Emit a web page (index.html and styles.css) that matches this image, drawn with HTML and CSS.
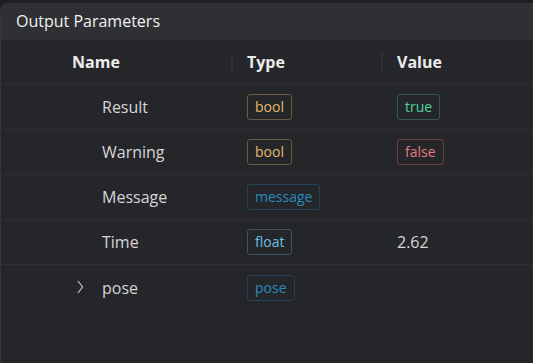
FILE: index.html
```html
<!DOCTYPE html>
<html lang="en">
<head>
  <meta charset="UTF-8">
  <title>Output Parameters</title>
  <link rel="stylesheet" href="styles.css">
</head>
<body>
  <div class="panel">
    <div class="panel-title">Output Parameters</div>
    <div class="table">
      <div class="row head">
        <div class="cell name">Name</div>
        <div class="cell type">Type</div>
        <div class="cell value">Value</div>
      </div>
      <div class="row">
        <div class="cell name">Result</div>
        <div class="cell type"><span class="tag tag-bool">bool</span></div>
        <div class="cell value"><span class="tag tag-true">true</span></div>
      </div>
      <div class="row">
        <div class="cell name">Warning</div>
        <div class="cell type"><span class="tag tag-bool">bool</span></div>
        <div class="cell value"><span class="tag tag-false">false</span></div>
      </div>
      <div class="row">
        <div class="cell name">Message</div>
        <div class="cell type"><span class="tag tag-msg">message</span></div>
        <div class="cell value"></div>
      </div>
      <div class="row">
        <div class="cell name">Time</div>
        <div class="cell type"><span class="tag tag-float">float</span></div>
        <div class="cell value">2.62</div>
      </div>
      <div class="row last">
        <div class="cell name">
          <svg class="chevron" width="10" height="14" viewBox="0 0 10 14"><path d="M3 1 L7.5 7 L3 13" fill="none" stroke="#c8c8c8" stroke-width="1.2"/></svg>
          pose
        </div>
        <div class="cell type"><span class="tag tag-msg">pose</span></div>
        <div class="cell value"></div>
      </div>
    </div>
  </div>
</body>
</html>
```

FILE: styles.css
```css
:root {
  --outer-bg: #1e1f23;
  --title-bg: #2f3033;
  --table-bg: #25262a;
  --line: #2e2f33;
  --text: #d6d6d6;
  --head-text: #ececec;
  --body-font: "Open Sans", "Noto Sans", sans-serif;
}

* {
  margin: 0;
  padding: 0;
  box-sizing: border-box;
  font-family: var(--body-font);
}

body {
  width: 533px;
  height: 363px;
  overflow: hidden;
  background: var(--outer-bg);
  padding-top: 3px;
}

.panel {
  height: 360px;
  background: var(--table-bg);
  border-left: 1px solid #34353a;
  border-top-left-radius: 7px;
  overflow: hidden;
}

.panel-title {
  height: 37px;
  background: var(--title-bg);
  color: #f0f0f0;
  font-size: 16px;
  line-height: 37px;
  padding-left: 15px;
}

.row {
  display: grid;
  grid-template-columns: 230px 150px 1fr;
  height: 45px;
  align-items: center;
  border-bottom: 1px solid var(--line);
  color: var(--text);
  font-size: 16px;
}

.row.head {
  font-weight: 700;
  color: var(--head-text);
}

.row.last {
  border-bottom: none;
}

.cell {
  display: flex;
  align-items: center;
  height: 100%;
  padding-left: 16px;
}

.cell.name {
  padding-left: 101px;
  position: relative;
}

.row.head .cell.name {
  padding-left: 71px;
}

.row.head .cell.type,
.row.head .cell.value {
  padding-left: 14px;
  border-left: 2px solid var(--line);
  height: 21px;
}

.chevron {
  position: absolute;
  left: 74px;
  top: 15px;
}

.tag {
  display: inline-block;
  font-size: 14px;
  line-height: 24px;
  padding: 0 7px;
  border: 1px solid;
  border-radius: 3px;
}

.tag-bool {
  color: #e2bb6e;
  border-color: #6a5c40;
}

.tag-true {
  color: #4fd1a3;
  border-color: #2f5c4f;
}

.tag-false {
  color: #e57a7c;
  border-color: #6a3c40;
}

.tag-msg {
  color: #2b8bbd;
  border-color: #1f4558;
}

.tag-float {
  color: #6fbde6;
  border-color: #3d5566;
}
```
